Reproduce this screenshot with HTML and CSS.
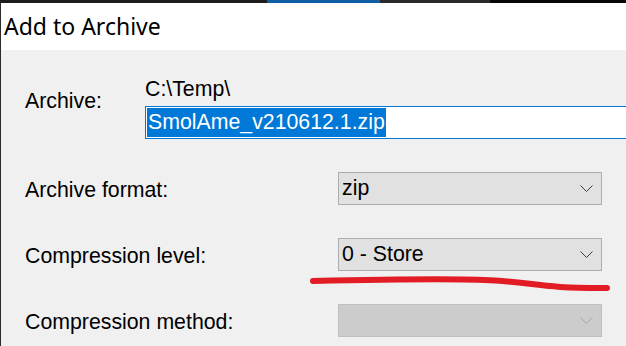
FILE: index.html
```html
<!DOCTYPE html>
<html lang="en">
<head>
  <meta charset="UTF-8" />
  <meta name="viewport" content="width=device-width, initial-scale=1.0"/>
  <title>Add to Archive</title>
  <link rel="stylesheet" href="styles.css">
</head>
<body>
  <div class="screen">
    <div class="topbar">
      <span class="seg seg-dark"></span>
      <span class="seg seg-blue"></span>
      <span class="seg seg-gray"></span>
      <span class="seg seg-black"></span>
    </div>

    <div class="dialog">
      <div class="titlebar">Add to Archive</div>

      <div class="dialog-body">
        <div class="archive-row">
          <label class="archive-label">Archive:</label>
          <div class="archive-col">
            <div class="archive-path">C:\Temp\</div>
            <div class="archive-input"><span class="selected-text">SmolAme_v210612.1.zip</span></div>
          </div>
        </div>

        <div class="options">
          <label class="option-label">Archive format:</label>
          <div class="combo">
            <span class="combo-value">zip</span>
            <svg class="chevron" width="13" height="7" viewBox="0 0 13 7"><polyline points="0.5,0.5 6.5,6.5 12.5,0.5" /></svg>
          </div>

          <label class="option-label">Compression level:</label>
          <div class="combo">
            <span class="combo-value">0 - Store</span>
            <svg class="chevron" width="13" height="7" viewBox="0 0 13 7"><polyline points="0.5,0.5 6.5,6.5 12.5,0.5" /></svg>
          </div>

          <label class="option-label">Compression method:</label>
          <div class="combo combo-disabled">
            <span class="combo-value"></span>
            <svg class="chevron" width="13" height="7" viewBox="0 0 13 7"><polyline points="0.5,0.5 6.5,6.5 12.5,0.5" /></svg>
          </div>
        </div>
      </div>
    </div>

    <!-- red marker stroke drawn over the dialog -->
    <svg class="scribble" width="626" height="346" viewBox="0 0 626 346">
      <path d="M313 281 C380 279.5, 455 278, 495 280.5 S545 288.5, 607 288" />
    </svg>
  </div>
</body>
</html>
```

FILE: styles.css
```css
* { margin: 0; padding: 0; box-sizing: border-box; }

body {
  background: #f0f0f0;
  font-family: 'Liberation Sans', Arial, sans-serif;
  font-size: 21.3px;
  color: #000;
  overflow: hidden;
}

.screen {
  position: relative;
  width: 626px;
  height: 346px;
  overflow: hidden;
}

/* strip of the taskbar / window above */
.topbar {
  display: flex;
  height: 3px;
}

.seg { display: block; height: 100%; }
.seg-dark { width: 267px; background: #1c1c1c; }
.seg-blue { width: 113px; background: #0f5ea6; }
.seg-gray { width: 110px; background: #2b2b2b; }
.seg-black { flex: 1; background: #060606; }

.dialog {
  height: 343px;
  border-left: 1px solid #2b2b2b;
}

.titlebar {
  height: 47px;
  line-height: 47px;
  padding-left: 3px;
  background: #fff;
  font-family: 'Noto Sans', 'Open Sans', sans-serif;
  font-size: 23px;
  color: #000;
}

.dialog-body {
  padding: 27px 0 0 24px;
}

.archive-row {
  display: flex;
}

.archive-label {
  flex-shrink: 0;
  width: 120px;
  margin-top: 12px;
  line-height: 24px;
}

.archive-col {
  flex-shrink: 0;
  width: 520px;
}

.archive-path {
  line-height: 24px;
  margin-bottom: 5px;
}

.archive-input {
  height: 33px;
  padding: 1px;
  border: 1px solid #0078d7;
  background: #fff;
}

.selected-text {
  display: inline-block;
  line-height: 29px;
  padding: 0 1px;
  background: #0078d7;
  color: #fff;
}

.options {
  display: grid;
  grid-template-columns: 313px 264px;
  row-gap: 33px;
  margin-top: 33px;
}

.option-label {
  height: 33px;
  padding-top: 4px;
  line-height: 29px;
}

.combo {
  display: flex;
  align-items: center;
  justify-content: space-between;
  height: 33px;
  padding: 0 8px 0 3px;
  border: 1px solid #adadad;
  background: #e1e1e1;
  line-height: 31px;
}

.chevron polyline {
  fill: none;
  stroke: #3c3c3c;
  stroke-width: 1;
}

.combo-disabled {
  background: #cccccc;
  border-color: #bfbfbf;
}

.combo-disabled .chevron polyline {
  stroke: #a6a6a6;
}

.scribble {
  position: absolute;
  left: 0;
  top: 0;
  pointer-events: none;
}

.scribble path {
  fill: none;
  stroke: #e21c24;
  stroke-width: 6;
  stroke-linecap: round;
}
```
